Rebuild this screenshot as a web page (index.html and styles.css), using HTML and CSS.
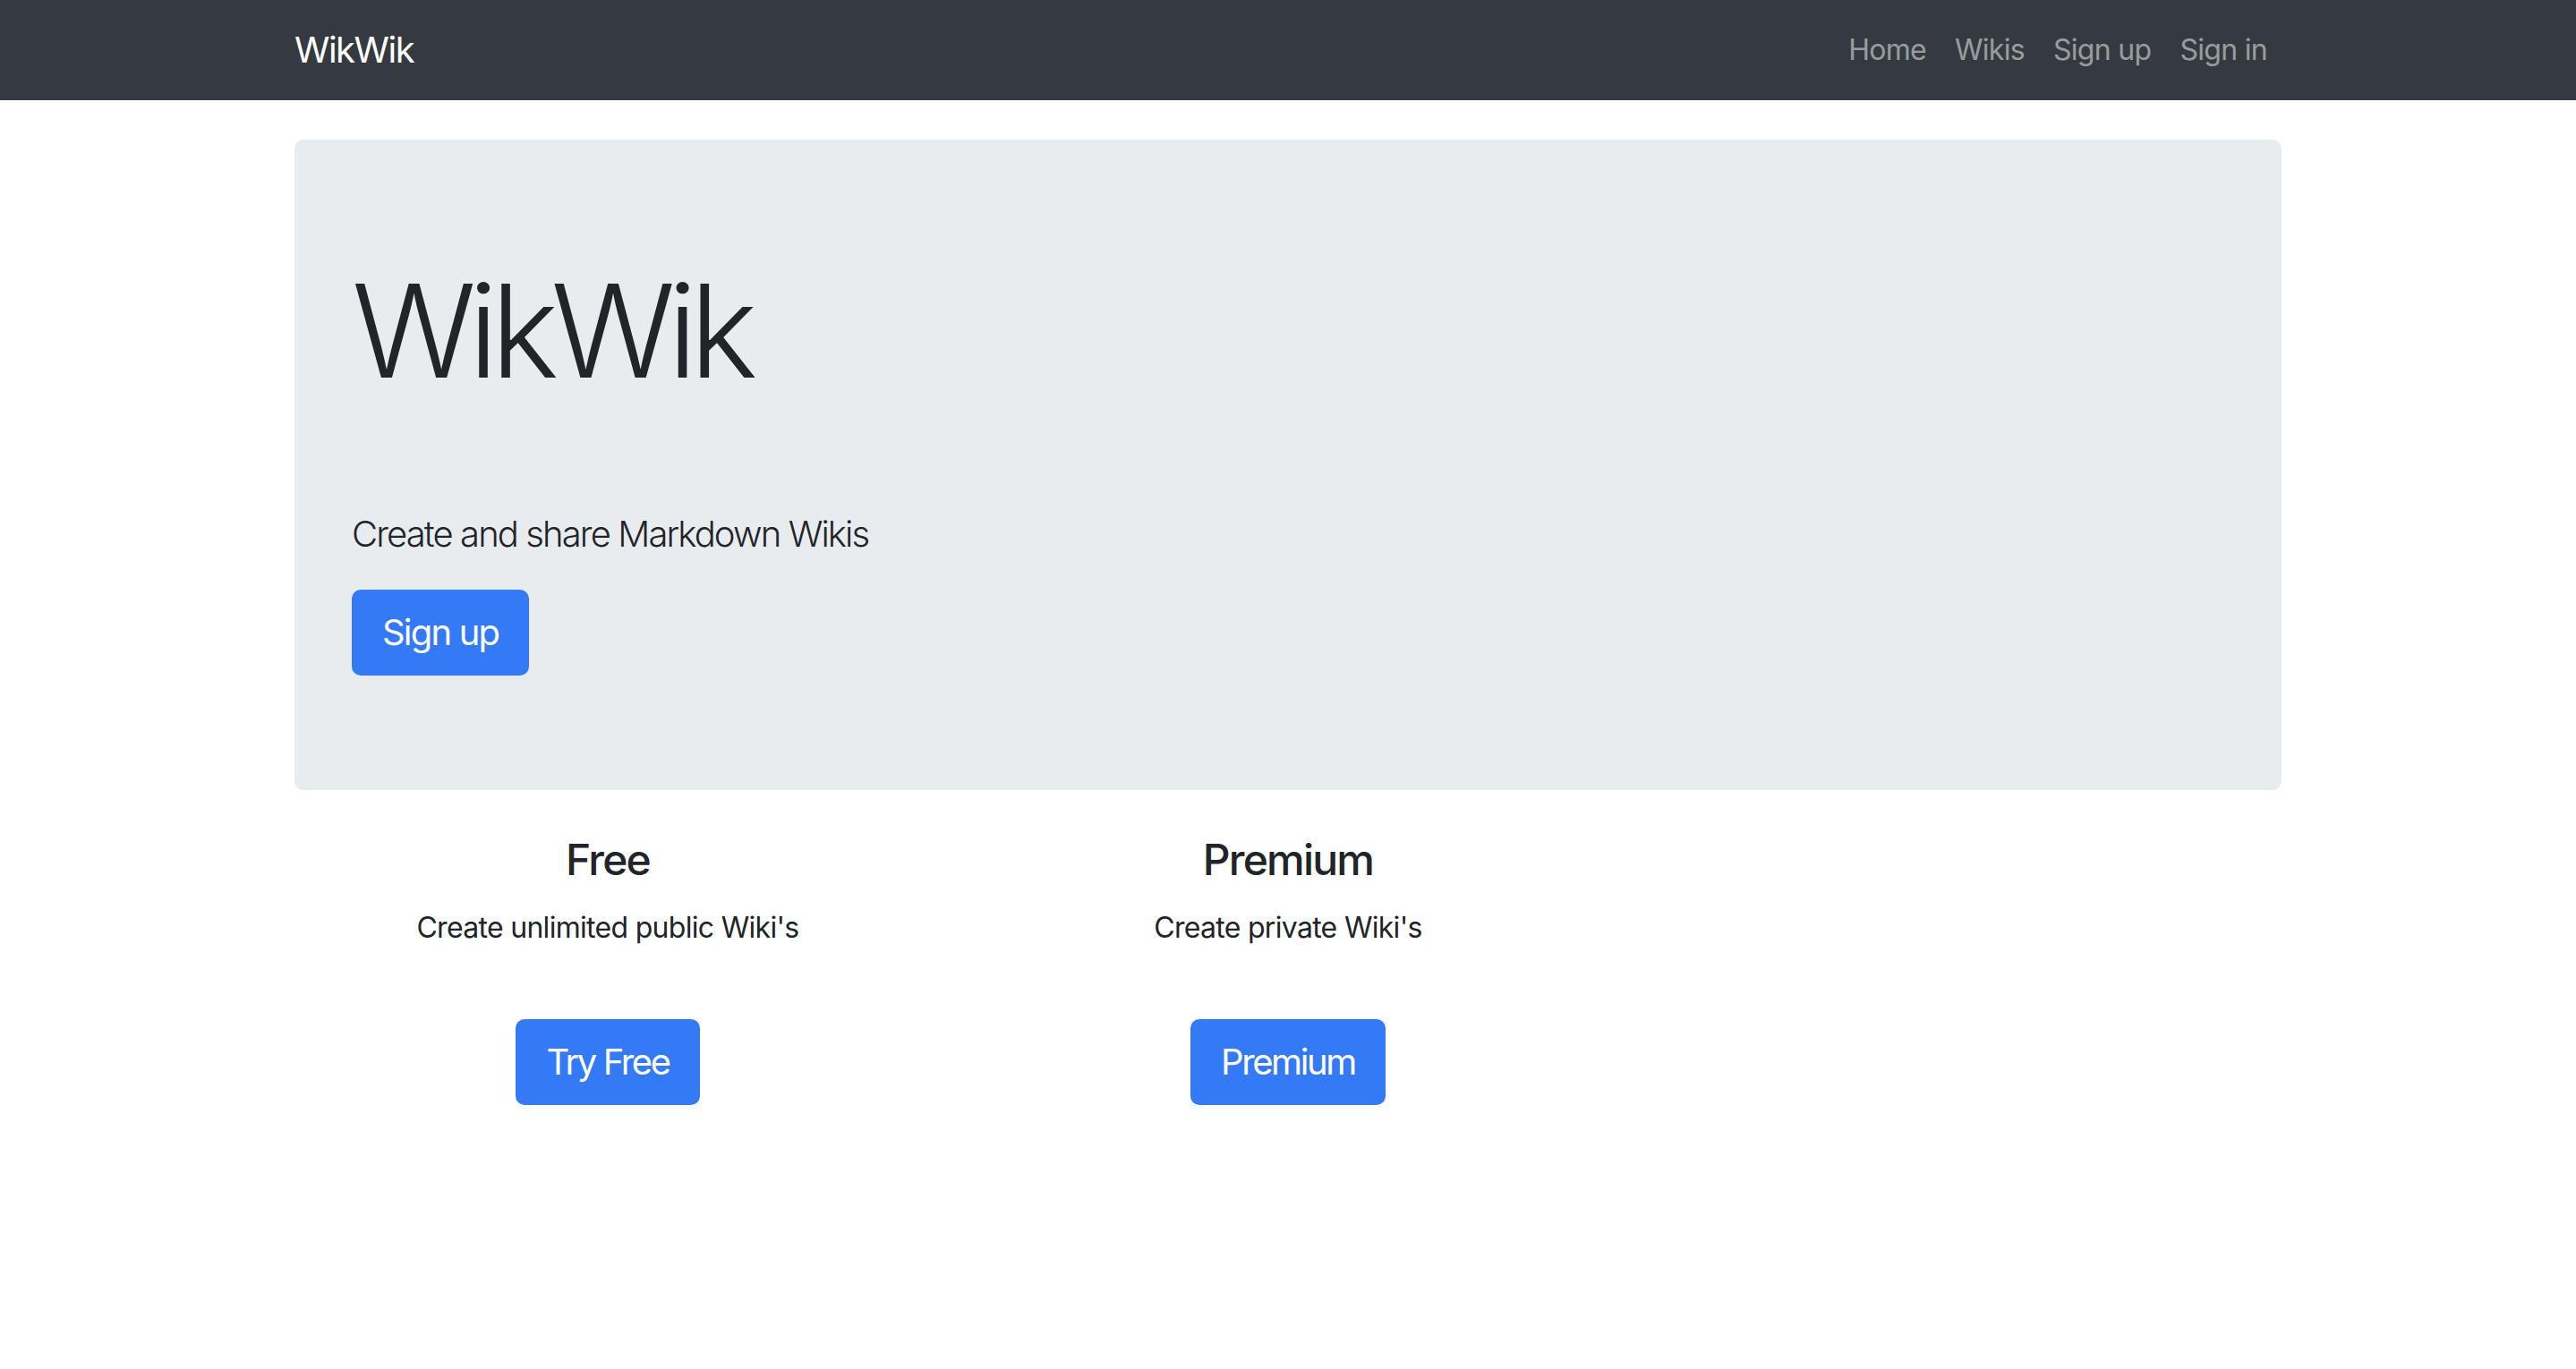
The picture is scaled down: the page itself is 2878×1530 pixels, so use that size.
FILE: index.html
```html
<!DOCTYPE html>
<html lang="en">
<head>
<meta charset="utf-8">
<title>WikWik</title>
<link rel="stylesheet" href="styles.css">
</head>
<body>
<nav class="navbar">
  <div class="container nav-inner">
    <a class="brand" href="#">WikWik</a>
    <ul class="nav-links">
      <li><a href="#">Home</a></li>
      <li><a href="#">Wikis</a></li>
      <li><a href="#">Sign up</a></li>
      <li><a href="#">Sign in</a></li>
    </ul>
  </div>
</nav>
<main class="container main">
  <section class="jumbotron">
    <h1 class="display">WikWik</h1>
    <p class="lead">Create and share Markdown Wikis</p>
    <a class="btn" href="#">Sign up</a>
  </section>
  <div class="plans">
    <div class="plan">
      <h4 class="plan-title">Free</h4>
      <p class="plan-text">Create unlimited public Wiki's</p>
      <a class="btn btn-plan" href="#">Try Free</a>
    </div>
    <div class="plan">
      <h4 class="plan-title">Premium</h4>
      <p class="plan-text">Create private Wiki's</p>
      <a class="btn btn-plan" href="#">Premium</a>
    </div>
    <div class="plan"></div>
  </div>
</main>
</body>
</html>
```
FILE: styles.css
```css
* { box-sizing: border-box; }
html, body {
  margin: 0;
  padding: 0;
  background: #ffffff;
  color: #212529;
  font-family: Inter, "Noto Sans", "Liberation Sans", sans-serif;
  font-size: 32px;
  line-height: 1.5;
}
a { text-decoration: none; }

.container {
  width: 2280px;
  margin: 0 auto;
  padding: 0 30px;
}

.navbar {
  background: #343a40;
  padding: 16px 32px;
}
.nav-inner {
  display: flex;
  align-items: center;
  justify-content: space-between;
}
.brand {
  color: #ffffff;
  font-size: 40px;
  line-height: 60px;
  padding: 10px 0;
  letter-spacing: -1.5px;
}
.nav-links {
  list-style: none;
  margin: 0;
  padding: 0;
  display: flex;
}
.nav-links a {
  display: block;
  color: rgba(255, 255, 255, 0.5);
  font-size: 32px;
  line-height: 48px;
  padding: 16px 16px;
  letter-spacing: -0.7px;
}

.main {
  padding-top: 44px;
}

.jumbotron {
  background: #e9ecef;
  border-radius: 10px;
  padding: 128px 64px;
  margin-bottom: 49px;
}
.display {
  margin: 0 0 110px;
  font-size: 144px;
  font-weight: 300;
  line-height: 172.8px;
  letter-spacing: -8.8px;
}
.lead {
  margin: 0 0 32px;
  font-size: 40px;
  font-weight: 300;
  line-height: 60px;
  letter-spacing: -1.9px;
}
.btn {
  display: inline-block;
  background: #3479f6;
  color: #ffffff;
  border: 2px solid #3479f6;
  border-radius: 10px;
  font-size: 40px;
  line-height: 60px;
  padding: 16px 32px;
  letter-spacing: -1.8px;
}
.btn-plan {
  letter-spacing: -2.4px;
}

.plans {
  display: grid;
  grid-template-columns: 1fr 1fr 1fr;
  column-gap: 60px;
  text-align: center;
}
.plan-title {
  margin: 0 0 24px;
  font-size: 48px;
  font-weight: 500;
  line-height: 57.6px;
  letter-spacing: -1.8px;
}
.plan-text {
  margin: 0 0 78px;
  font-size: 32px;
  line-height: 48px;
  letter-spacing: -0.7px;
}
```
